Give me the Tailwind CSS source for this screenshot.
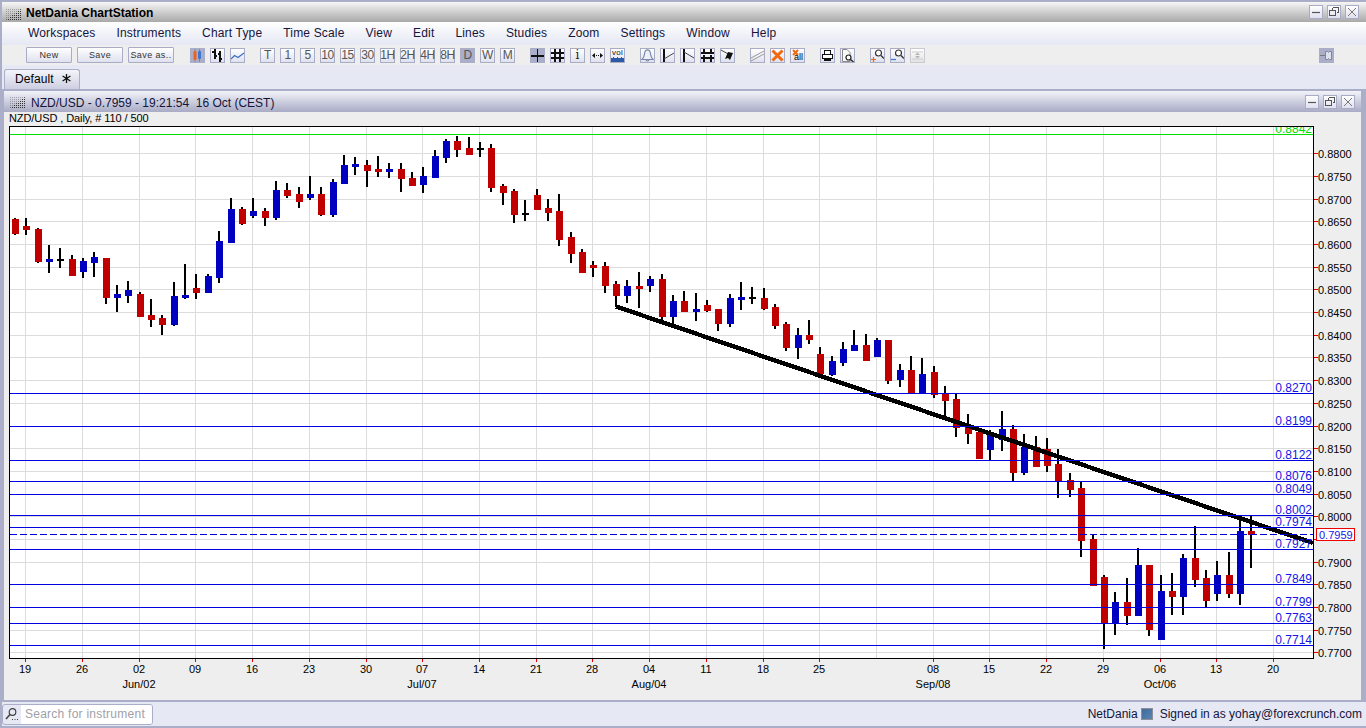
<!DOCTYPE html>
<html>
<head>
<meta charset="utf-8">
<title>NetDania ChartStation</title>
<script src="https://cdn.jsdelivr.net/npm/@tailwindcss/browser@4"></script>
</head>
<body class="w-[1366px] h-[728px] overflow-hidden bg-[#abaec8] font-['Liberation_Sans',Arial,sans-serif] text-black flex flex-col pt-[2px]">

<!-- app title bar -->
<div class="h-[20px] ml-[2px] flex items-center bg-gradient-to-b from-[#f6f6f6] to-[#a9a9a9] pl-[4px] pr-[7px]">
  <svg class="w-[15px] h-[11px] mt-[4px]" viewBox="0 0 15 11"><defs><pattern id="g1" width="2" height="2" patternUnits="userSpaceOnUse"><rect width="1" height="1" fill="#333"/></pattern></defs><rect width="15" height="11" fill="url(#g1)" opacity=".35"/><path d="M15 0V11H0Z" fill="url(#g1)"/></svg>
  <span class="ml-[5px] mt-[2px] text-[12px] font-bold">NetDania ChartStation</span>
  <div class="ml-auto flex gap-[4px]">
    <button class="w-[14px] h-[14px] border border-[#a9acc6] bg-gradient-to-b from-white to-[#dfe1ee] flex items-center justify-center"><svg class="w-[12px] h-[12px]" viewBox="0 0 12 12"><path d="M2 6.5H10" stroke="#555" stroke-width="1.2"/></svg></button>
    <button class="w-[14px] h-[14px] border border-[#a9acc6] bg-gradient-to-b from-white to-[#dfe1ee] flex items-center justify-center"><svg class="w-[12px] h-[12px]" viewBox="0 0 12 12" shape-rendering="crispEdges"><path d="M4.5 1.5H10.5V6.5H8.5M4.5 1.5V3.5" fill="none" stroke="#555"/><rect x="1.5" y="4.5" width="6" height="5" fill="none" stroke="#555"/></svg></button>
    <button class="w-[14px] h-[14px] border border-[#a9acc6] bg-gradient-to-b from-white to-[#dfe1ee] flex items-center justify-center"><svg class="w-[12px] h-[12px]" viewBox="0 0 12 12"><path d="M2 2L10 10M10 2L2 10" stroke="#777" stroke-width="1"/></svg></button>
  </div>
</div>

<!-- menu -->
<nav class="h-[23px] ml-[2px] pl-[26px] pb-[2px] flex items-center gap-[21px] bg-gradient-to-b from-white to-[#e5e7f3] text-[12px] tracking-[0.17px] text-[#14143c]">
  <span>Workspaces</span><span>Instruments</span><span>Chart Type</span><span>Time Scale</span><span>View</span><span>Edit</span><span>Lines</span><span>Studies</span><span>Zoom</span><span>Settings</span><span>Window</span><span>Help</span>
</nav>

<!-- toolbar -->
<div class="h-[20px] ml-[2px] pl-[24px] pr-[32px] flex items-center bg-[#eeeeee]">
  <div class="flex gap-[5px] text-[9px] tracking-[0.4px] text-[#333]">
    <button class="w-[46px] h-[16px] pt-[1px] border border-[#a9acc6] rounded-[1px] bg-gradient-to-b from-white to-[#dfe1ee]">New</button>
    <button class="w-[46px] h-[16px] pt-[1px] border border-[#a9acc6] rounded-[1px] bg-gradient-to-b from-white to-[#dfe1ee]">Save</button>
    <button class="w-[46px] h-[16px] pt-[1px] border border-[#a9acc6] rounded-[1px] bg-gradient-to-b from-white to-[#dfe1ee]">Save as..</button>
  </div>
  <div class="ml-[16px] flex gap-[5px]">
    <div class="w-[15px] h-[15px] bg-[#abaec8] flex items-center justify-center"><svg class="w-[13px] h-[13px]" viewBox="0 0 13 13"><path d="M4 0V13M8.5 0V13" stroke="#888"/><rect x="2.5" y="2" width="3" height="9" rx="1" fill="#f0601a"/><rect x="7" y="2" width="3" height="8" rx="1" fill="#3a78d0"/></svg></div>
    <div class="w-[15px] h-[15px] border border-[#a9acc6] bg-gradient-to-b from-white to-[#dfe1ee] flex items-center justify-center"><svg class="w-[13px] h-[13px]" viewBox="0 0 13 13" shape-rendering="crispEdges"><path d="M4 0V10M1 3H4M4 7H6M9 2V13M7 5H9M9 10H11" stroke="#111" stroke-width="1.4" fill="none"/></svg></div>
    <div class="w-[15px] h-[15px] border border-[#a9acc6] bg-gradient-to-b from-white to-[#dfe1ee] flex items-center justify-center"><svg class="w-[13px] h-[13px]" viewBox="0 0 13 13"><path d="M0 10L3.5 6.5L7 8.5L13 4" stroke="#3a6fc0" stroke-width="1.2" fill="none"/></svg></div>
  </div>
  <div class="ml-[15px] flex gap-[5px] text-[12px] text-[#555] tracking-[-0.5px] leading-none">
    <span class="w-[15px] h-[15px] border border-[#a9acc6] bg-gradient-to-b from-white to-[#dfe1ee] flex items-center justify-center">T</span>
    <span class="w-[15px] h-[15px] border border-[#a9acc6] bg-gradient-to-b from-white to-[#dfe1ee] flex items-center justify-center">1</span>
    <span class="w-[15px] h-[15px] border border-[#a9acc6] bg-gradient-to-b from-white to-[#dfe1ee] flex items-center justify-center">5</span>
    <span class="w-[15px] h-[15px] border border-[#a9acc6] bg-gradient-to-b from-white to-[#dfe1ee] flex items-center justify-center">10</span>
    <span class="w-[15px] h-[15px] border border-[#a9acc6] bg-gradient-to-b from-white to-[#dfe1ee] flex items-center justify-center">15</span>
    <span class="w-[15px] h-[15px] border border-[#a9acc6] bg-gradient-to-b from-white to-[#dfe1ee] flex items-center justify-center">30</span>
    <span class="w-[15px] h-[15px] border border-[#a9acc6] bg-gradient-to-b from-white to-[#dfe1ee] flex items-center justify-center">1H</span>
    <span class="w-[15px] h-[15px] border border-[#a9acc6] bg-gradient-to-b from-white to-[#dfe1ee] flex items-center justify-center">2H</span>
    <span class="w-[15px] h-[15px] border border-[#a9acc6] bg-gradient-to-b from-white to-[#dfe1ee] flex items-center justify-center">4H</span>
    <span class="w-[15px] h-[15px] border border-[#a9acc6] bg-gradient-to-b from-white to-[#dfe1ee] flex items-center justify-center">8H</span>
    <span class="w-[15px] h-[15px] bg-[#abaec8] flex items-center justify-center">D</span>
    <span class="w-[15px] h-[15px] border border-[#a9acc6] bg-gradient-to-b from-white to-[#dfe1ee] flex items-center justify-center">W</span>
    <span class="w-[15px] h-[15px] border border-[#a9acc6] bg-gradient-to-b from-white to-[#dfe1ee] flex items-center justify-center">M</span>
  </div>
  <div class="ml-[15px] flex gap-[5px]">
    <div class="w-[15px] h-[15px] bg-[#abaec8] flex items-center justify-center"><svg class="w-[13px] h-[13px]" viewBox="0 0 13 13" shape-rendering="crispEdges"><path d="M0 7H13M6.5 0V13" stroke="#111" stroke-width="1.6"/></svg></div>
    <div class="w-[15px] h-[15px] border border-[#a9acc6] bg-gradient-to-b from-white to-[#dfe1ee] flex items-center justify-center"><svg class="w-[13px] h-[13px]" viewBox="0 0 13 13" shape-rendering="crispEdges"><path d="M0 4H13M0 9H13M4 0V13M9 0V13" stroke="#111" stroke-width="1.6"/></svg></div>
    <div class="w-[15px] h-[15px] border border-[#a9acc6] bg-gradient-to-b from-white to-[#dfe1ee] flex items-center justify-center text-[12px] font-['DejaVu_Serif'] leading-none text-[#222]">i</div>
    <div class="w-[15px] h-[15px] border border-[#a9acc6] bg-gradient-to-b from-white to-[#dfe1ee] flex items-center justify-center"><svg class="w-[13px] h-[13px]" viewBox="0 0 13 13"><path d="M4 4V9L1 6.5ZM9 4V9L12 6.5Z" fill="#111"/><rect x="5" y="6" width="1" height="1" fill="#111"/><rect x="7" y="6" width="1" height="1" fill="#111"/></svg></div>
    <div class="w-[15px] h-[15px] border border-[#a9acc6] bg-gradient-to-b from-white to-[#dfe1ee] flex flex-col items-center overflow-hidden"><span class="text-[8px] leading-[8px] tracking-[0.2px] text-[#111]">vol</span><svg class="w-[13px] h-[5px]" viewBox="0 0 13 5" shape-rendering="crispEdges"><path d="M0 1H2V0H3V1H6V0H7V1H10V0H11V1H13V5H0Z" fill="#2b5aa8"/></svg></div>
  </div>
  <div class="ml-[15px] flex gap-[5px]">
    <div class="w-[15px] h-[15px] border border-[#a9acc6] bg-gradient-to-b from-white to-[#dfe1ee] flex items-center justify-center"><svg class="w-[13px] h-[13px]" viewBox="0 0 13 13"><path d="M6.5 .8C4 .8 3.6 3 3.4 5.5C3.2 8 2.5 9 1 10.5H12C10.5 9 9.8 8 9.6 5.5C9.4 3 9 .8 6.5 .8ZM5 11Q6.5 13 8 11" fill="#eef0f8" stroke="#7b87a8" stroke-width="1.2"/></svg></div>
    <div class="w-[15px] h-[15px] border border-[#a9acc6] bg-gradient-to-b from-white to-[#dfe1ee] flex items-center justify-center"><svg class="w-[13px] h-[13px]" viewBox="0 0 13 13"><path d="M3 0V13" stroke="#111" stroke-width="2"/><path d="M3 10L13 4" stroke="#444"/></svg></div>
    <div class="w-[15px] h-[15px] border border-[#a9acc6] bg-gradient-to-b from-white to-[#dfe1ee] flex items-center justify-center"><svg class="w-[13px] h-[13px]" viewBox="0 0 13 13"><path d="M3 0V13" stroke="#111" stroke-width="2"/><path d="M3 3L13 9" stroke="#444"/></svg></div>
    <div class="w-[15px] h-[15px] border border-[#a9acc6] bg-gradient-to-b from-white to-[#dfe1ee] flex items-center justify-center"><svg class="w-[13px] h-[13px]" viewBox="0 0 13 13" shape-rendering="crispEdges"><path d="M0 4H13M0 9H13M3 0V4M10 0V4M3 6V13M10 6V13" stroke="#111" stroke-width="1.4"/></svg></div>
    <div class="w-[15px] h-[15px] border border-[#a9acc6] bg-gradient-to-b from-white to-[#dfe1ee] flex items-center justify-center"><svg class="w-[13px] h-[13px]" viewBox="0 0 13 13"><path d="M0 1L9 6" stroke="#444"/><path d="M7 3L12 4L9 11L7 9L4 10Z" fill="#111"/></svg></div>
  </div>
  <div class="ml-[15px] flex gap-[5px]">
    <div class="w-[15px] h-[15px] border border-[#a9acc6] bg-gradient-to-b from-white to-[#dfe1ee] flex items-center justify-center"><svg class="w-[13px] h-[13px]" viewBox="0 0 13 13"><path d="M0 9L13 2M0 12L13 5" stroke="#999"/></svg></div>
    <div class="w-[15px] h-[15px] border border-[#a9acc6] bg-gradient-to-b from-white to-[#dfe1ee] flex items-center justify-center"><svg class="w-[13px] h-[13px]" viewBox="0 0 13 13"><path d="M1.5 1.5L11.5 11.5M11.5 1.5L1.5 11.5" stroke="#f2690f" stroke-width="3"/></svg></div>
    <div class="w-[15px] h-[15px] border border-[#a9acc6] bg-gradient-to-b from-white to-[#dfe1ee] relative overflow-hidden"><svg class="w-[7px] h-[7px] ml-[1px]" viewBox="0 0 7 7"><path d="M1 1L6 6M6 1L1 6" stroke="#f2690f" stroke-width="2"/></svg><span class="absolute right-[1px] bottom-[0px] text-[9px] leading-[9px] text-black">all</span></div>
  </div>
  <div class="ml-[15px] flex gap-[5px]">
    <div class="w-[15px] h-[15px] border border-[#a9acc6] bg-gradient-to-b from-white to-[#dfe1ee] flex items-center justify-center"><svg class="w-[13px] h-[13px]" viewBox="0 0 13 13" shape-rendering="crispEdges"><path d="M3.5 5V1.5H9.5V5M1.5 5.5H11.5V9.5H1.5ZM3 11H10" fill="#fff" stroke="#111" stroke-width="1.3"/></svg></div>
    <div class="w-[15px] h-[15px] border border-[#a9acc6] bg-gradient-to-b from-white to-[#dfe1ee] flex items-center justify-center"><svg class="w-[13px] h-[13px]" viewBox="0 0 13 13"><path d="M1.5 .5H6L9 3.5V12.5H1.5Z" fill="#f8f8f8" stroke="#888"/><circle cx="7.5" cy="8.5" r="2.5" fill="#fff" stroke="#222" stroke-width="1.2"/><path d="M9.5 10.5L12.5 13" stroke="#222" stroke-width="1.4"/></svg></div>
  </div>
  <div class="ml-[15px] flex gap-[5px]">
    <div class="w-[15px] h-[15px] border border-[#a9acc6] bg-gradient-to-b from-white to-[#dfe1ee] flex items-center justify-center"><svg class="w-[13px] h-[13px]" viewBox="0 0 13 13"><circle cx="7.5" cy="4" r="3" fill="#fff" stroke="#333" stroke-width="1.2"/><path d="M10 6.5L13 9.5" stroke="#333" stroke-width="1.4"/><path d="M0 10.5H5M2.5 8V13" stroke="#f2690f" stroke-width="1.2"/></svg></div>
    <div class="w-[15px] h-[15px] border border-[#a9acc6] bg-gradient-to-b from-white to-[#dfe1ee] flex items-center justify-center"><svg class="w-[13px] h-[13px]" viewBox="0 0 13 13"><circle cx="7.5" cy="4" r="3" fill="#fff" stroke="#333" stroke-width="1.2"/><path d="M10 6.5L13 9.5" stroke="#333" stroke-width="1.4"/><path d="M0 10.5H5" stroke="#3a78d0" stroke-width="1.2"/></svg></div>
    <div class="w-[15px] h-[15px] border border-[#c9cad2] bg-gradient-to-b from-white to-[#e2e2e2] flex items-center justify-center"><svg class="w-[13px] h-[13px]" viewBox="0 0 13 13"><path d="M1 3H12M1 10H12" stroke="#ccc"/><path d="M6.5 3.5L9 6H4ZM6.5 9.5L4 7H9Z" fill="#b5b5b5"/></svg></div>
  </div>
  <div class="ml-auto w-[15px] h-[15px] bg-[#abaec8] flex items-center justify-center"><svg class="w-[13px] h-[13px]" viewBox="0 0 13 13"><path d="M0 6.5H5" stroke="#777"/><path d="M5.5 2.5H7.5L8.5 3.5L9.5 2.5H11.5V10.5H9.5L8.5 9.5L7.5 10.5H5.5Z" fill="#dfe1ee" stroke="#85858f"/></svg></div>
</div>

<!-- tab strip -->
<div class="h-[24px] ml-[2px] pl-[2px] bg-[#e6e8f4] flex items-end">
  <div class="w-[76px] h-[20px] pl-[10px] pr-[8px] pb-[2px] flex items-center justify-between rounded-t-[3px] border border-b-0 border-[#abaec8] bg-gradient-to-b from-[#f4f5fa] to-[#cdcfe2] text-[12px] tracking-[0.1px]">
    <span>Default</span>
    <svg class="w-[9px] h-[9px]" viewBox="0 0 9 9"><path d="M4.5 0V9M.6 2L8.4 7M8.4 2L.6 7" stroke="#111" stroke-width="1.3"/></svg>
  </div>
</div>

<!-- chart window -->
<section class="mt-[2px] ml-[4px] w-[1357px] h-[609px] bg-[#eeeeee] flex flex-col">
  <div class="h-[21px] shrink-0 flex items-center pl-[6px] pr-[6px] bg-gradient-to-b from-[#f3f4f9] to-[#a9abc6]">
    <svg class="w-[15px] h-[11px] mt-[2px]" viewBox="0 0 15 11"><defs><pattern id="g2" width="2" height="2" patternUnits="userSpaceOnUse"><rect width="1" height="1" fill="#333"/></pattern></defs><rect width="15" height="11" fill="url(#g2)" opacity=".35"/><path d="M15 0V11H0Z" fill="url(#g2)"/></svg>
    <span class="ml-[6px] mt-[3px] text-[12px] text-[#14143c] whitespace-pre">NZD/USD - 0.7959 - 19:21:54  16 Oct (CEST)</span>
    <div class="ml-auto flex gap-[4px]">
      <button class="w-[14px] h-[14px] border border-[#a9acc6] bg-gradient-to-b from-white to-[#dfe1ee] flex items-center justify-center"><svg class="w-[12px] h-[12px]" viewBox="0 0 12 12"><path d="M2 6.5H10" stroke="#555" stroke-width="1.2"/></svg></button>
      <button class="w-[14px] h-[14px] border border-[#a9acc6] bg-gradient-to-b from-white to-[#dfe1ee] flex items-center justify-center"><svg class="w-[12px] h-[12px]" viewBox="0 0 12 12" shape-rendering="crispEdges"><path d="M4.5 1.5H10.5V6.5H8.5M4.5 1.5V3.5" fill="none" stroke="#555"/><rect x="1.5" y="4.5" width="6" height="5" fill="none" stroke="#555"/></svg></button>
      <button class="w-[14px] h-[14px] border border-[#a9acc6] bg-gradient-to-b from-white to-[#dfe1ee] flex items-center justify-center"><svg class="w-[12px] h-[12px]" viewBox="0 0 12 12"><path d="M2 2L10 10M10 2L2 10" stroke="#777" stroke-width="1"/></svg></button>
    </div>
  </div>
  <div class="h-[14px] shrink-0 pl-[5px] text-[11px] leading-[13px] tracking-[-0.09px]">NZD/USD , Daily, # 110 / 500</div>
  <svg class="w-[1357px] h-[574px] text-[11px]" viewBox="4 126 1357 574" font-size="11">
    <g shape-rendering="crispEdges">
      <rect x="9" y="126" width="1305" height="533" fill="#fff"/>
      <path stroke="#dcdcdc" d="M10 153.5H1313M10 176.5H1313M10 199.5H1313M10 221.5H1313M10 244.5H1313M10 267.5H1313M10 289.5H1313M10 312.5H1313M10 335.5H1313M10 357.5H1313M10 380.5H1313M10 403.5H1313M10 426.5H1313M10 448.5H1313M10 471.5H1313M10 494.5H1313M10 516.5H1313M10 539.5H1313M10 562.5H1313M10 584.5H1313M10 607.5H1313M10 630.5H1313M10 652.5H1313"/>
      <path stroke="#dcdcdc" d="M25.5 127V658M82.5 127V658M139.5 127V658M195.5 127V658M252.5 127V658M309.5 127V658M366.5 127V658M422.5 127V658M479.5 127V658M536.5 127V658M592.5 127V658M649.5 127V658M706.5 127V658M763.5 127V658M819.5 127V658M876.5 127V658M933.5 127V658M989.5 127V658M1046.5 127V658M1103.5 127V658M1160.5 127V658M1216.5 127V658M1273.5 127V658"/>
      <!-- wicks -->
      <path stroke="#000" stroke-width="2" fill="none" d="M15 218V235M26 218V235M38 228V263M49 245V273M60 248V268M72 255V276M83 258V278M94 252V277M106 258V304M117 285V312M128 281V303M140 292V317M151 299V327M162 315V335M174 282V326M185 264V299M196 274V299M208 274V293M219 231V283M231 198V243M242 207V225M253 198V218M265 208V226M276 181V220M287 183V198M299 187V208M310 176V200M321 187V216M333 179V217M344 155V184M355 157V175M367 160V187M378 156V177M389 163V178M401 163V192M412 172V186M423 167V193M435 150V178M446 139V163M457 136V157M469 137V155M480 142V157M491 144V192M503 184V205M514 189V223M525 200V221M537 189V210M548 199V221M559 194V246M571 232V263M582 249V273M593 261V277M605 262V293M616 281V307M627 280V303M639 272V308M650 276V292M662 274V321M673 295V325M684 291V312M696 293V321M707 300V312M718 309V331M730 294V327M741 282V310M752 287V304M764 288V310M775 304V329M786 322V351M798 328V359M809 320V344M820 347V374M832 356V376M843 342V366M854 330V351M866 334V361M877 338V357M888 340V384M900 364V387M911 356V393M922 358V393M934 366V398M945 386V418M956 394V437M968 414V444M979 431V459M990 430V460M1002 411V451M1013 425V481M1024 434V475M1036 436V467M1047 438V472M1058 449V498M1070 473V497M1081 482V557M1093 535V586M1104 575V649M1115 592V635M1127 578V625M1138 548V616M1149 565V636M1161 575V640M1172 573V615M1183 554V615M1195 526V587M1206 570V607M1217 561V601M1229 552V598M1240 519V605M1251 516V568"/>
      <!-- red bodies -->
      <path stroke="#c00000" stroke-width="7" fill="none" d="M15.5 219V234M26.5 226V230M38.5 229V262M72.5 259V276M106.5 258V298M140.5 294V317M151.5 315V320M162.5 318V325M196.5 288V293M242.5 209V224M265.5 211V218M287.5 190V196M299.5 194V202M321.5 194V215M367.5 165V171M378.5 169V172M401.5 169V179M412.5 178V186M457.5 141V150M469.5 148V155M491.5 148V188M503.5 186V193M514.5 191V215M537.5 195V210M548.5 208V213M559.5 211V240M571.5 237V254M582.5 252V273M593.5 265V268M605.5 266V286M616.5 284V296M639.5 286V289M662.5 279V317M684.5 301V312M707.5 305V311M718.5 309V324M764.5 298V309M775.5 307V326M786.5 324V348M809.5 335V340M820.5 354V374M866.5 345V361M888.5 340V381M911.5 370V393M934.5 372V395M945.5 393V401M956.5 399V428M968.5 425V434M979.5 432V459M1013.5 429V473M1036.5 447V467M1047.5 449V466M1058.5 464V481M1070.5 480V490M1081.5 488V541M1093.5 539V586M1104.5 577V623M1127.5 602V616M1149.5 565V630M1172.5 591V597M1195.5 558V580M1206.5 578V601M1229.5 575V594M1251.5 531V535"/>
      <!-- blue bodies -->
      <path stroke="#0000c0" stroke-width="7" fill="none" d="M49.5 259V262M83.5 261V272M94.5 257V263M117.5 294V298M128.5 290V296M174.5 296V325M185.5 295V298M208.5 276V293M219.5 241V278M231.5 209V243M253.5 211V216M276.5 190V218M310.5 194V198M333.5 182V215M344.5 165V184M355.5 164V167M389.5 169V172M423.5 176V185M435.5 156V178M446.5 141V158M627.5 286V296M650.5 279V286M673.5 301V317M696.5 309V312M730.5 298V324M741.5 297V300M798.5 335V348M832.5 361V375M843.5 349V363M854.5 345V351M877.5 340V357M900.5 370V380M922.5 374V393M990.5 435V450M1002.5 429V440M1024.5 447V473M1115.5 602V624M1138.5 565V616M1161.5 591V640M1183.5 558V597M1217.5 575V594M1240.5 531V594"/>
      <!-- dojis -->
      <path stroke="#000" stroke-width="7" fill="none" d="M60.5 259V261M480.5 148V150M525.5 213V215M752.5 297V299"/>
      <!-- trend line -->
      <path d="M616 306.5L1313 543" stroke="#000" stroke-width="4.4" fill="none"/>
      <!-- horizontal studies -->
      <path stroke="#00e000" d="M10 134.5H1313"/>
      <path stroke="#0000e0" d="M10 393.5H1313M10 426.5H1313M10 460.5H1313M10 481.5H1313M10 494.5H1313M10 515.5H1313M10 527.5H1313M10 549.5H1313M10 584.5H1313M10 607.5H1313M10 623.5H1313M10 645.5H1313"/>
      <path stroke="#0000e0" stroke-dasharray="7 3" d="M10 534.5H1313"/>
    </g>
    <g font-size="12" text-anchor="end" fill="#1414e6">
      <text x="1312" y="133" fill="#00dc00">0.8842</text>
      <text x="1312" y="392">0.8270</text>
      <text x="1312" y="425">0.8199</text>
      <text x="1312" y="459">0.8122</text>
      <text x="1312" y="480">0.8076</text>
      <text x="1312" y="493">0.8049</text>
      <text x="1312" y="514">0.8002</text>
      <text x="1312" y="526">0.7974</text>
      <text x="1312" y="548">0.7927</text>
      <text x="1312" y="583">0.7849</text>
      <text x="1312" y="606">0.7799</text>
      <text x="1312" y="622">0.7763</text>
      <text x="1312" y="644">0.7714</text>
    </g>
    <g shape-rendering="crispEdges">
      <rect x="9.5" y="126.5" width="1304" height="532" fill="none" stroke="#000"/>
      <path stroke="#e00000" d="M1314 153.5H1318M1314 176.5H1318M1314 199.5H1318M1314 221.5H1318M1314 244.5H1318M1314 267.5H1318M1314 289.5H1318M1314 312.5H1318M1314 335.5H1318M1314 357.5H1318M1314 380.5H1318M1314 403.5H1318M1314 426.5H1318M1314 448.5H1318M1314 471.5H1318M1314 494.5H1318M1314 516.5H1318M1314 539.5H1318M1314 562.5H1318M1314 584.5H1318M1314 607.5H1318M1314 630.5H1318M1314 652.5H1318"/>
      <path stroke="#e00000" d="M25.5 659V662M82.5 659V662M139.5 659V662M195.5 659V662M252.5 659V662M309.5 659V662M366.5 659V662M422.5 659V662M479.5 659V662M536.5 659V662M592.5 659V662M649.5 659V662M706.5 659V662M763.5 659V662M819.5 659V662M933.5 659V662M989.5 659V662M1046.5 659V662M1103.5 659V662M1160.5 659V662M1216.5 659V662M1273.5 659V662"/>
    </g>
    <g fill="#000">
      <text x="1318" y="158">0.8800</text><text x="1318" y="181">0.8750</text><text x="1318" y="204">0.8700</text><text x="1318" y="226">0.8650</text><text x="1318" y="249">0.8600</text><text x="1318" y="272">0.8550</text><text x="1318" y="294">0.8500</text><text x="1318" y="317">0.8450</text><text x="1318" y="340">0.8400</text><text x="1318" y="362">0.8350</text><text x="1318" y="385">0.8300</text><text x="1318" y="408">0.8250</text><text x="1318" y="431">0.8200</text><text x="1318" y="453">0.8150</text><text x="1318" y="476">0.8100</text><text x="1318" y="499">0.8050</text><text x="1318" y="521">0.8000</text><text x="1318" y="567">0.7900</text><text x="1318" y="589">0.7850</text><text x="1318" y="612">0.7800</text><text x="1318" y="635">0.7750</text><text x="1318" y="657">0.7700</text>
    </g>
    <rect x="1316.5" y="528.5" width="38" height="12" fill="#fff" stroke="#f00000" shape-rendering="crispEdges"/>
    <text x="1319" y="539" fill="#1414e6">0.7959</text>
    <g fill="#000" text-anchor="middle">
      <text x="25" y="673">19</text><text x="82" y="673">26</text><text x="139" y="673">02</text><text x="195" y="673">09</text><text x="252" y="673">16</text><text x="309" y="673">23</text><text x="366" y="673">30</text><text x="422" y="673">07</text><text x="479" y="673">14</text><text x="536" y="673">21</text><text x="592" y="673">28</text><text x="649" y="673">04</text><text x="706" y="673">11</text><text x="763" y="673">18</text><text x="819" y="673">25</text><text x="933" y="673">08</text><text x="989" y="673">15</text><text x="1046" y="673">22</text><text x="1103" y="673">29</text><text x="1160" y="673">06</text><text x="1216" y="673">13</text><text x="1273" y="673">20</text>
      <text x="139" y="688">Jun/02</text><text x="422" y="688">Jul/07</text><text x="649" y="688">Aug/04</text><text x="933" y="688">Sep/08</text><text x="1160" y="688">Oct/06</text>
    </g>
  </svg>
</section>

<!-- status bar -->
<footer class="mt-[2px] ml-[2px] h-[24px] bg-[#e6e8f4] flex items-center pr-[4px] text-[12px] text-[#14143c]">
  <div class="w-[151px] h-[21px] border border-[#abaec8] rounded-[3px] flex overflow-hidden">
    <div class="w-[18px] flex items-center justify-center"><svg class="w-[14px] h-[14px]" viewBox="0 0 14 14"><circle cx="7.5" cy="5" r="3.3" fill="none" stroke="#444" stroke-width="1.2"/><path d="M5 7.5L1 12" stroke="#444" stroke-width="1.6"/><path d="M7 12.5H8M9.5 12.5H10.5M12 12.5H13" stroke="#444"/></svg></div>
    <div class="flex-1 bg-white pl-[4px] leading-[19px] text-[#a0a0a8] tracking-[0.25px]">Search for instrument</div>
  </div>
  <span class="ml-auto">NetDania</span>
  <span class="ml-[3px] w-[12px] h-[12px] border border-[#8f8f9a] bg-gradient-to-br from-[#3f6a9b] to-[#5b85b0]"></span>
  <span class="ml-[7px]">Signed in as yohay@forexcrunch.com</span>
</footer>
</body>
</html>
